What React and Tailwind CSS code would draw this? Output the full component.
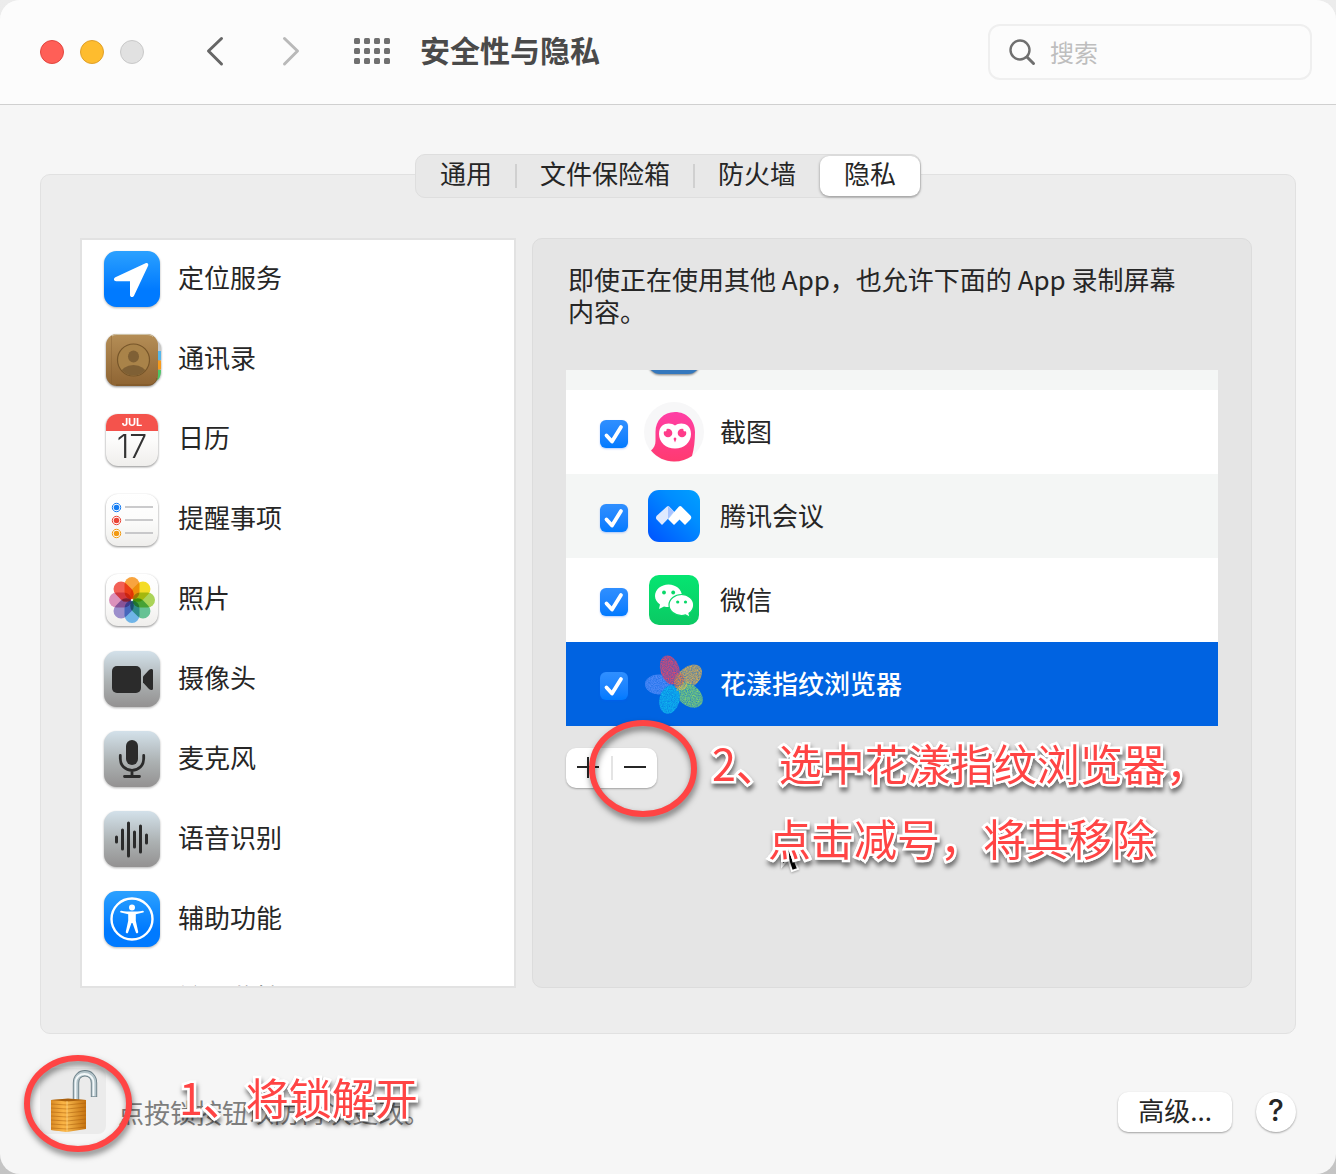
import { useState } from 'react';

const TABS = ['通用', '文件保险箱', '防火墙', '隐私'];

const PETALS = ['#f7941d', '#f2d600', '#9ccc3c', '#4cb883', '#58a9e6', '#8c7cc4', '#d67fb0', '#f04438'];

/* ---------- sidebar icons ---------- */

function Tile({ fill, children }) {
  return (
    <svg viewBox="0 0 56 56" className="h-14 w-14 shrink-0 overflow-visible drop-shadow-[0_1px_1px_rgba(0,0,0,0.3)]" aria-hidden="true">
      <defs>
        <linearGradient id="tile-blue" x1="0" y1="0" x2="0" y2="1">
          <stop offset="0" stopColor="#2ba1ff" />
          <stop offset="0.7" stopColor="#007aff" />
        </linearGradient>
        <linearGradient id="tile-gray" x1="0" y1="0" x2="0" y2="1">
          <stop offset="0" stopColor="#d3e1ea" />
          <stop offset="0.55" stopColor="#acb1b2" />
          <stop offset="1" stopColor="#939191" />
        </linearGradient>
      </defs>
      <rect width="56" height="56" rx="12.5" fill={`url(#tile-${fill})`} />
      {children}
    </svg>
  );
}

function PaperTile({ children }) {
  return (
    <svg viewBox="0 0 56 56" className="h-14 w-14 shrink-0 overflow-visible drop-shadow-[0_1px_1px_rgba(0,0,0,0.45)]" aria-hidden="true">
      <defs>
        <linearGradient id="paper" x1="0" y1="0" x2="0" y2="1">
          <stop offset="0" stopColor="#ffffff" />
          <stop offset="0.5" stopColor="#fcfcfb" />
          <stop offset="1" stopColor="#efeeec" />
        </linearGradient>
      </defs>
      <rect x="2" y="3" width="52" height="52" rx="12" fill="url(#paper)" />
      {children}
    </svg>
  );
}

const LocationIcon = () => (
  <Tile fill="blue">
    <path d="M41.5 12.2c1.8-.8 3.4.6 2.6 2.5L30 44.8c-1 2-4 1.500-4-.9V30.300H12.200c-2.500 0-3-3-.8-4z" fill="#fff" />
  </Tile>
);

const ContactsIcon = () => (
  <svg viewBox="0 0 56 56" className="h-14 w-14 shrink-0 overflow-visible drop-shadow-[0_1px_1px_rgba(0,0,0,0.45)]" aria-hidden="true">
    <defs>
      <linearGradient id="leather" x1="0" y1="0" x2="0" y2="1">
        <stop offset="0" stopColor="#b58e56" />
        <stop offset="1" stopColor="#8e6433" />
      </linearGradient>
      <clipPath id="contact-clip"><circle cx="29.500" cy="29" r="15.500" /></clipPath>
    </defs>
    <path d="M46 9h5c3.500 1 6 4 6 8v3H46z" fill="#c9c9c7" />
    <path d="M46 20h11v9H46z" fill="#56b7ea" />
    <path d="M46 29.500h11v9H46z" fill="#f79b1c" />
    <path d="M46 39h11c0 6-2 10-6 11h-5z" fill="#4cc764" />
    <rect x="2" y="3" width="52" height="52" rx="11" fill="url(#leather)" />
    <path d="M7.500 5v48" stroke="#7f5a2e" strokeWidth="1" opacity=".35" />
    <path d="M12 54h33c4 0 7.500-3 8-7" fill="none" stroke="#70491f" strokeWidth="1" opacity=".6" />
    <path d="M8 5c2-1.300 3-1.500 6-1.500h28c3 0 5 .5 7 2" fill="none" stroke="#cfc3a7" strokeWidth="1" />
    <circle cx="29.500" cy="29" r="16" fill="#a98349" stroke="#77562a" strokeWidth="1.200" />
    <g fill="#7f6035" clipPath="url(#contact-clip)">
      <ellipse cx="29.500" cy="25.500" rx="5.500" ry="6" />
      <ellipse cx="29.500" cy="43" rx="13" ry="9" />
    </g>
  </svg>
);

const CalendarIcon = () => (
  <PaperTile>
    <path d="M2 20v-5C2 8 7 3 14 3h28c7 0 12 5 12 12v5z" fill="#f4534c" />
    <text x="28" y="15" textAnchor="middle" fontSize="11" fontWeight="700" fontFamily="Inter, sans-serif" fill="#fff">JUL</text>
    <text x="28" y="47" textAnchor="middle" fontSize="32" fontWeight="300" fontFamily="Inter, sans-serif" fill="#333">17</text>
  </PaperTile>
);

const RemindersIcon = () => (
  <PaperTile>
    {['#147cf2', '#ea4335', '#f29a12'].map((c, i) => (
      <g key={c}>
        <circle cx="12.500" cy={16.500 + i * 13} r="4.200" fill="#fff" stroke={c} strokeWidth="1" />
        <circle cx="12.500" cy={16.500 + i * 13} r="2.800" fill={c} />
        <path d={`M21 ${16 + i * 13}h28`} stroke="#bdbdbf" strokeWidth="1.600" />
      </g>
    ))}
  </PaperTile>
);

const PhotosIcon = () => (
  <PaperTile>
    <g style={{ isolation: 'isolate' }}>
      {PETALS.map((c, i) => (
        <rect
          key={c}
          x="20.500"
          y="6"
          width="15"
          height="22.500"
          rx="7.500"
          fill={c}
          fillOpacity="0.85"
          transform={`rotate(${i * 45} 28 29)`}
          className="mix-blend-multiply"
        />
      ))}
    </g>
    <circle cx="28" cy="29" r="1" fill="#fff" />
  </PaperTile>
);

const CameraIcon = () => (
  <Tile fill="gray">
    <rect x="8" y="15" width="29" height="27" rx="5" fill="#2b2b2b" />
    <path d="M39 25.500 45 19c1.500-1.500 4-1.500 4 .5v18c0 2-2.500 2-4 .5l-6-6.500z" fill="#2b2b2b" />
  </Tile>
);

const MicIcon = () => (
  <Tile fill="gray">
    <rect x="22" y="9" width="12" height="25" rx="6" fill="#2b2b2b" />
    <path d="M16.300 24.500v3c0 7 5 11.800 11.700 11.800s11.700-4.800 11.700-11.800v-3M28 39.500v5.500M20.500 45.500h15" fill="none" stroke="#2b2b2b" strokeWidth="2.800" strokeLinecap="round" />
  </Tile>
);

const SpeechIcon = () => (
  <Tile fill="gray">
    <path d="M12.500 26v5M18.500 19v19M24.500 12v33M30.500 21v15M36.500 15v26M42.500 24v8" stroke="#2b2b2b" strokeWidth="3" strokeLinecap="round" />
  </Tile>
);

const AccessibilityIcon = () => (
  <Tile fill="blue">
    <circle cx="28" cy="28" r="20.500" fill="none" stroke="#fff" strokeWidth="2.400" />
    <circle cx="28" cy="16.500" r="3" fill="#fff" />
    <path d="M17.300 19.700c6.500 1.200 15 1.200 21.400 0 1.300-.2 1.600 1.500.4 1.800l-7.300 1.800v6.500l2.400 11c.3 1.500-1.800 2.200-2.300.7L28.500 32h-1l-3.400 9.500c-.5 1.500-2.600.8-2.300-.7l2.400-11v-6.500l-7.300-1.800c-1.200-.3-.9-2 .4-1.800z" fill="#fff" />
  </Tile>
);

/* ---------- app icons ---------- */

const HiddenAppIcon = () => (
  <svg viewBox="0 0 52 52" className="h-[52px] w-[52px] shrink-0 drop-shadow-[0_1px_1px_rgba(0,0,0,0.5)]" aria-hidden="true">
    <rect width="52" height="52" rx="12" fill="#3478bd" />
  </svg>
);

const OwlIcon = () => (
  <svg viewBox="0 0 52 52" className="h-[52px] w-[52px] shrink-0 overflow-visible" aria-hidden="true">
    <defs>
      <linearGradient id="owl" x1="0" y1="0" x2="0" y2="1">
        <stop offset="0" stopColor="#ff3fa6" />
        <stop offset="1" stopColor="#ff3a70" />
      </linearGradient>
    </defs>
    <circle cx="26" cy="26" r="30" fill="#f7f7f8" />
    <path d="M27 6C15.500 6 7.500 14.500 7.500 26v9c0 4-1.500 7-4.500 9.500 6 7 14 11 23 11 7 0 13-2 18-5.500 2-7 3-15 3-24C47 14.500 38.500 6 27 6z" fill="url(#owl)" />
    <path d="M27 19.500c4-3.500 16-3.500 16 8.500 0 8.500-7 14.500-16 14.500s-16-6-16-14.500c0-12 12-12 16-8.500z" fill="#fff" />
    <circle cx="20" cy="27" r="4.300" fill="#ff3c8a" />
    <circle cx="34" cy="27" r="4.300" fill="#ff3c8a" />
    <circle cx="17" cy="23.800" r="1.700" fill="#fff" />
    <circle cx="37" cy="23.800" r="1.700" fill="#fff" />
    <path d="M27 31.500c1.300 0 1.500 1 1.200 2L27 36.500l-1.200-3c-.3-1-.1-2 1.200-2z" fill="#ff3c8a" />
  </svg>
);

const MeetingIcon = () => (
  <svg viewBox="0 0 52 52" className="h-[52px] w-[52px] shrink-0" aria-hidden="true">
    <defs>
      <linearGradient id="meeting" x1="1" y1="0" x2="0" y2="1">
        <stop offset="0" stopColor="#00a0ff" />
        <stop offset="0.35" stopColor="#008dff" />
        <stop offset="1" stopColor="#0052ff" />
      </linearGradient>
    </defs>
    <rect width="52" height="52" rx="11" fill="url(#meeting)" />
    <path d="M9 25.500 19 16.500c1-.8 1.600-.6 2.200 0l5.300 5.500L14 35l-5.300-5.500c-1-1.200-1-2.800.3-4z" fill="#dfe9ff" />
    <path d="M20 16v13l6-7z" fill="#a8c4ff" />
    <path d="m20 29 11-12.500c.8-.8 1.600-.8 2.400 0l9 9c1.200 1.200 1.200 2.800 0 4L37 35l-5.500-5.500L26 35z" fill="#fff" />
  </svg>
);

const WeChatIcon = () => (
  <svg viewBox="0 0 52 52" className="h-[52px] w-[52px] shrink-0" aria-hidden="true">
    <defs>
      <linearGradient id="wechat" x1="0" y1="0" x2="0" y2="1">
        <stop offset="0" stopColor="#05e571" />
        <stop offset="1" stopColor="#0bc963" />
      </linearGradient>
    </defs>
    <rect x="1" y="1" width="50" height="50" rx="10" fill="url(#wechat)" />
    <path d="M20.500 10.500C13 10.500 7 15.500 7 22c0 3.500 2 6.500 5 8.500L11 35l5-2.600c1.500.5 3 .7 4.500.7C28 33 34 28.500 34 22s-6-11.500-13.500-11.500z" fill="#fff" />
    <path d="M33.500 20.500C27 20.500 21 25 21 31s6 10.500 12.500 10.500c1.300 0 2.700-.2 4-.6l4.500 2.300-1-4c2.800-1.800 4.700-4.800 4.700-8.200 0-6-5.500-10.500-12.200-10.500z" fill="#fff" stroke="#09d869" strokeWidth="1.200" />
    <g fill="#09d869">
      <circle cx="16" cy="18.500" r="1.900" />
      <circle cx="25.200" cy="18.500" r="1.900" />
      <circle cx="29.700" cy="28" r="1.600" />
      <circle cx="37.500" cy="28" r="1.600" />
    </g>
  </svg>
);

const FlowerIcon = () => (
  <svg viewBox="0 0 52 52" className="h-[52px] w-[52px] shrink-0 overflow-visible" aria-hidden="true">
    <defs>
      <filter id="grain" x="-10%" y="-10%" width="120%" height="120%">
        <feTurbulence type="fractalNoise" baseFrequency="0.83" numOctaves="3" seed="7" result="n" />
        <feColorMatrix in="n" type="matrix" values="0 0 0 0 0  0 0 0 0 0  0 0 0 0 0  0 0 0 -1 1.200" result="m" />
        <feComposite in="SourceGraphic" in2="m" operator="in" />
      </filter>
    </defs>
    <g filter="url(#grain)">
      <ellipse cx="11" cy="26.500" rx="14" ry="10" fill="#6b97ff" fillOpacity=".8" transform="rotate(3 11 26.500)" />
      <ellipse cx="22" cy="12" rx="9.500" ry="15" fill="#e0486c" transform="rotate(-18 22 12)" />
      <ellipse cx="41" cy="19" rx="15" ry="10" fill="#eeb645" fillOpacity=".9" transform="rotate(-42 41 19)" />
      <ellipse cx="41" cy="37" rx="15.500" ry="10.500" fill="#86d66c" fillOpacity=".95" transform="rotate(38 41 37)" />
      <ellipse cx="21.500" cy="41.500" rx="10" ry="14.500" fill="#12b8ee" transform="rotate(14 21.500 41.500)" />
      <ellipse cx="31" cy="23" rx="5" ry="8" fill="#f5793b" fillOpacity=".8" transform="rotate(12 31 23)" />
      <path d="m30 29 12-6-5 8-9 2z" fill="#f6d23a" fillOpacity=".8" />
    </g>
  </svg>
);

const PadlockIcon = () => (
  <svg viewBox="0 0 66 66" className="h-[66px] w-[66px]" aria-hidden="true">
    <defs>
      <linearGradient id="brass" x1="0" y1="0" x2="1" y2="0">
        <stop offset="0" stopColor="#b9680e" />
        <stop offset="0.35" stopColor="#ffc255" />
        <stop offset="1" stopColor="#c5720f" />
      </linearGradient>
    </defs>
    <path d="M36 32V15c0-13 18-13 18 0v14" fill="none" stroke="#6b7f87" strokeWidth="6.400" />
    <path d="M36 32V15c0-13 18-13 18 0v13.500" fill="none" stroke="#b4c4ca" strokeWidth="4.600" />
    <path d="M35.500 32V15c0-12 18-12 18 0v13" fill="none" stroke="#f3f8f9" strokeWidth="1.800" />
    <path d="m11 32 17-1 18 1v29l-19 3-16-2z" fill="url(#brass)" />
    <path d="m11 32 16 1v31l-16-2z" fill="#f5a93a" fillOpacity=".55" />
    <path d="m11 32 17-1.500 18 1.500-19 1.500z" fill="#a9600f" />
    {[36, 40, 44, 48, 52, 56, 60].map((y) => (
      <path key={y} d={`m11 ${y} 16 1 19-2`} fill="none" stroke="#a85c0b" strokeWidth="1" opacity=".5" />
    ))}
    <path d="M27 33v31" stroke="#ffd88a" strokeWidth="1" opacity=".7" />
  </svg>
);

const CATEGORIES = [
  { name: '定位服务', Icon: LocationIcon },
  { name: '通讯录', Icon: ContactsIcon },
  { name: '日历', Icon: CalendarIcon },
  { name: '提醒事项', Icon: RemindersIcon },
  { name: '照片', Icon: PhotosIcon },
  { name: '摄像头', Icon: CameraIcon },
  { name: '麦克风', Icon: MicIcon },
  { name: '语音识别', Icon: SpeechIcon },
  { name: '辅助功能', Icon: AccessibilityIcon },
];

const APPS = [
  { name: '截图', Icon: OwlIcon, bg: 'bg-white' },
  { name: '腾讯会议', Icon: MeetingIcon, bg: 'bg-[#f4f6f5]' },
  { name: '微信', Icon: WeChatIcon, bg: 'bg-white' },
  { name: '花漾指纹浏览器', Icon: FlowerIcon, bg: 'bg-[#f4f6f5]' },
];

/* ---------- pieces ---------- */

// red note with a white outline; the eight small shadows round the outline's corners
function Note({ className, children }) {
  return (
    <p
      className={`pointer-events-none absolute text-[43px] leading-[75px] whitespace-nowrap text-[#ff4444] drop-shadow-[1px_4px_2px_rgba(0,0,0,0.5)] [-webkit-text-stroke:5px_white] [paint-order:stroke_fill] [text-shadow:2px_0_#fff,-2px_0_#fff,0_2px_#fff,0_-2px_#fff,2px_2px_#fff,-2px_2px_#fff,2px_-2px_#fff,-2px_-2px_#fff] ${className}`}
    >
      {children}
    </p>
  );
}

function Ring({ className }) {
  return (
    <svg viewBox="0 0 108 98" className={`pointer-events-none absolute h-[98px] w-[108px] overflow-visible drop-shadow-[1px_4px_3px_rgba(0,0,0,0.5)] ${className}`} aria-hidden="true">
      <ellipse cx="54" cy="48.500" rx="51" ry="45.500" fill="none" stroke="#ff4444" strokeWidth="6" />
    </svg>
  );
}

function AppRow({ app, selected, onSelect }) {
  const [allowed, setAllowed] = useState(true);
  return (
    <li onClick={onSelect} className={`h-[84px] shrink-0 ${selected ? 'bg-[#0063e1] font-medium text-white' : app.bg}`}>
      <label className="flex h-full items-center pl-[34px]">
        <span className="relative mt-1 h-7 w-7 shrink-0">
          <input
            type="checkbox"
            checked={allowed}
            onChange={(e) => setAllowed(e.target.checked)}
            className="block h-7 w-7 appearance-none rounded-md border border-gray-300 bg-white shadow-[0_1px_2px_rgba(0,90,255,0.3)] checked:border-0 checked:bg-linear-to-b checked:from-[#2f8fff] checked:to-[#007aff]"
          />
          {allowed && (
            <svg viewBox="0 0 28 28" className="pointer-events-none absolute inset-0 h-7 w-7" aria-hidden="true">
              <path d="m6.500 15.500 5.500 6L21 7" fill="none" stroke="#fff" strokeWidth="3.800" strokeLinecap="round" strokeLinejoin="round" />
            </svg>
          )}
        </span>
        <span className="ml-5"><app.Icon /></span>
        <span className="ml-5 pb-0.5">{app.name}</span>
      </label>
    </li>
  );
}

function Toolbar() {
  return (
    <header className="flex h-[105px] items-center border-b border-[#d0d0d0] bg-[#fcfcfc] pr-6 pl-10">
      <div className="flex gap-4">
        <button aria-label="关闭" className="h-6 w-6 rounded-full border border-[#e2463f] bg-[#ff5f57]" />
        <button aria-label="最小化" className="h-6 w-6 rounded-full border border-[#e0a02a] bg-[#febc2e]" />
        <button aria-label="缩放" className="h-6 w-6 rounded-full border border-[#c9c9c9] bg-[#e1e1e1]" />
      </div>
      <button aria-label="后退" className="ml-[60px]">
        <svg viewBox="0 0 22 32" className="h-8 w-[22px]"><path d="M17.500 2.500 4.500 15l13 13" fill="none" stroke="#666" strokeWidth="3" strokeLinecap="round" strokeLinejoin="round" /></svg>
      </button>
      <button aria-label="前进" className="ml-[54px]">
        <svg viewBox="0 0 22 32" className="h-8 w-[22px]"><path d="m4.500 2.500 13 12.500-13 13" fill="none" stroke="#b9b9b9" strokeWidth="3" strokeLinecap="round" strokeLinejoin="round" /></svg>
      </button>
      <button aria-label="显示全部" className="ml-[52px]">
        <svg viewBox="0 0 36 28" className="h-7 w-9">
          {[0, 1, 2].map((r) => [0, 1, 2, 3].map((c) => (
            <rect key={`${r}${c}`} x={c * 10} y={r * 10} width="6" height="6" rx="1.500" fill="#707070" />
          )))}
        </svg>
      </button>
      <h1 className="ml-[30px] pb-1.5 text-[30px] font-bold text-[#4a4a4a]">安全性与隐私</h1>
      <label className="ml-auto flex h-14 w-[324px] items-center rounded-xl border-2 border-[#efefef] pl-[18px]">
        <svg viewBox="0 0 28 28" className="h-7 w-7 shrink-0" aria-hidden="true">
          <circle cx="12" cy="12" r="9.500" fill="none" stroke="#6f6f6f" strokeWidth="2.400" />
          <path d="m19 19 6.500 6.500" stroke="#6f6f6f" strokeWidth="3" strokeLinecap="round" />
        </svg>
        <input type="search" aria-label="搜索" placeholder="搜索" className="ml-[14px] min-w-0 flex-1 bg-transparent text-[24px] outline-none placeholder:text-[#bebebe]" />
      </label>
    </header>
  );
}

export default function App() {
  const [tab, setTab] = useState(3);
  const [selected, setSelected] = useState(3);

  return (
    <div className="min-h-screen bg-linear-to-b from-[#ececec] to-[#c4c4c4] font-['Noto_Sans_CJK_SC',sans-serif] text-[26px] leading-8 text-[#262626]">
      <div className="flex min-h-screen flex-col overflow-hidden rounded-[20px] bg-[#f6f6f6]">
        <Toolbar />

        <main className="flex flex-1 flex-col px-10 pt-[49px]">
          <div role="tablist" className="relative z-10 mx-auto flex h-11 items-stretch rounded-[10px] border border-[#dedede] bg-[#e8e8e8] py-px">
            {TABS.map((name, i) => (
              <button
                key={name}
                role="tab"
                aria-selected={tab === i}
                onClick={() => setTab(i)}
                className={`relative px-6 pb-1.5 ${tab === i ? 'rounded-[9px] bg-white shadow-[0_1px_3px_rgba(0,0,0,0.4)]' : ''}`}
              >
                {name}
                {i < 3 && tab !== i && tab !== i + 1 && <span className="absolute top-2 -right-px h-6 w-0.5 bg-[#d0d0d0]" />}
              </button>
            ))}
          </div>

          <section className="-mt-6 flex rounded-[10px] border border-[#e1e1e1] bg-[#ededed] pt-[63px] pr-[43px] pb-[45px] pl-[39px]">
            <ul className="h-[750px] w-[436px] shrink-0 overflow-hidden border-2 border-[#e2e2e2] bg-white">
              {CATEGORIES.map(({ name, Icon }) => (
                <li key={name} className="flex h-20 items-center gap-[18px] pb-0.5 pl-[22px]">
                  <Icon />
                  <span className="pb-1">{name}</span>
                </li>
              ))}
              <li className="flex h-20 items-center pb-0.5 pl-24"><span className="pb-1">输入监控</span></li>
            </ul>

            <div className="relative ml-4 h-[750px] min-w-0 flex-1 rounded-[10px] border border-[#dcdcdc] bg-[#e5e5e5] px-[33px] pt-6">
              <p className="pr-8 pl-[2px]">即使正在使用其他 App，也允许下面的 App 录制屏幕内容。</p>
              <ul className="mt-[43px] flex h-[356px] flex-col justify-end overflow-hidden">
                <li className="flex h-[84px] shrink-0 items-center bg-[#f4f6f5] pl-[82px]"><HiddenAppIcon /></li>
                {APPS.map((app, i) => (
                  <AppRow key={app.name} app={app} selected={selected === i} onSelect={() => setSelected(i)} />
                ))}
              </ul>
              <div className="mt-[22px] flex h-10 w-[91px] items-center rounded-[10px] bg-white shadow-[0_1px_2px_rgba(0,0,0,0.3)]">
                <button aria-label="添加" className="grid h-full flex-1 place-items-center">
                  <svg viewBox="0 0 22 22" className="h-[22px] w-[22px]"><path d="M0 10h22M11 0v21" stroke="#262626" strokeWidth="2" /></svg>
                </button>
                <span className="h-6 w-0.5 bg-[#e4e4e4]" />
                <button aria-label="移除" className="grid h-full flex-1 place-items-center">
                  <svg viewBox="0 0 22 22" className="h-[22px] w-[22px]"><path d="M0 10h22" stroke="#262626" strokeWidth="2" /></svg>
                </button>
              </div>

              <svg viewBox="0 0 28 44" className="pointer-events-none absolute top-[588px] left-[244px] h-11 w-7 overflow-visible drop-shadow-[0_1px_1px_rgba(0,0,0,0.3)]" aria-hidden="true">
                <path d="M5 20v19l6-7 4 12 6-2-5-13 6-1z" fill="#000" stroke="#fff" strokeWidth="2" />
              </svg>
              <Ring className="top-[481px] left-[56px]" />
              <Note className="top-[486px] left-[179px]">
                2、选中花漾指纹浏览器，
                <br />
                <span className="ml-14">点击减号，将其移除</span>
              </Note>
            </div>
          </section>
        </main>

        <footer className="relative flex items-end px-10 pt-[34px] pb-10">
          <button aria-label="锁" className="h-[66px] w-[66px] shrink-0 rounded-lg bg-[#ebebeb]"><PadlockIcon /></button>
          <p className="ml-3 leading-[44px] text-[#7d7d7d]">点按锁按钮以防再次更改。</p>
          <div className="mb-0.5 ml-auto flex items-center gap-6">
            <button className="h-10 rounded-[10px] bg-white px-5 pb-1 shadow-[0_1px_2px_rgba(0,0,0,0.35)]">高级...</button>
            <button aria-label="帮助" className="h-10 w-10 rounded-full bg-white pb-1 font-[Inter,sans-serif] text-[30px] font-medium shadow-[0_1px_2px_rgba(0,0,0,0.35)]">?</button>
          </div>
          <Ring className="top-[21px] left-6" />
          <Note className="top-[25px] left-[179px]">1、将锁解开</Note>
        </footer>
      </div>
    </div>
  );
}
